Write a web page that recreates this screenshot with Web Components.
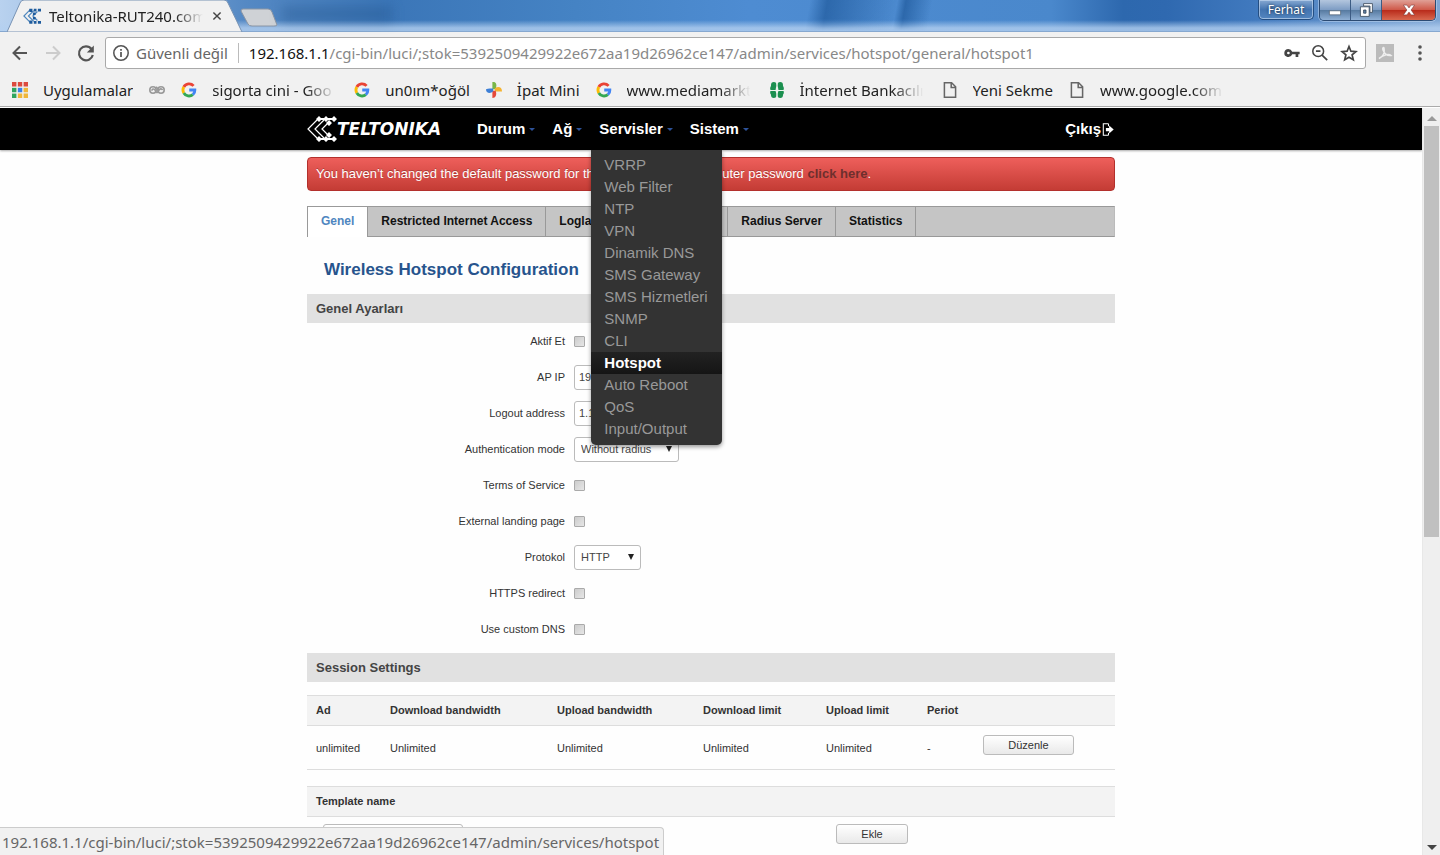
<!DOCTYPE html>
<html lang="tr">
<head>
<meta charset="utf-8">
<title>Teltonika-RUT240.com</title>
<style>
  html, body { margin: 0; height: 100%; overflow: hidden; }
  body { font-family: "Liberation Sans", Arial, sans-serif; color: #333; background: #fefefe; }
</style>
</head>
<body>
<browser-window>
  <tab-strip slot="tabs" label="Teltonika-RUT240.com" user="Ferhat"></tab-strip>
  <address-bar slot="toolbar" host="192.168.1.1" path="/cgi-bin/luci/;stok=5392509429922e672aa19d26962ce147/admin/services/hotspot/general/hotspot1"></address-bar>
  <bookmarks-bar slot="bookmarks">
    <bookmark-link icon="apps">Uygulamalar</bookmark-link>
    <bookmark-link icon="owl" bare></bookmark-link>
    <bookmark-link icon="google" clip>sigorta cini - Goo</bookmark-link>
    <bookmark-link icon="google">un0ım*oğöl</bookmark-link>
    <bookmark-link icon="pinwheel">İpat Mini</bookmark-link>
    <bookmark-link icon="google" clip>www.mediamarkt</bookmark-link>
    <bookmark-link icon="clover" clip>İnternet Bankacılı</bookmark-link>
    <bookmark-link icon="page">Yeni Sekme</bookmark-link>
    <bookmark-link icon="page" clip>www.google.com.</bookmark-link>
  </bookmarks-bar>

  <site-nav>
    <nav-entry>Durum</nav-entry>
    <nav-entry>Ağ</nav-entry>
    <nav-entry items="VRRP|Web Filter|NTP|VPN|Dinamik DNS|SMS Gateway|SMS Hizmetleri|SNMP|CLI|Hotspot|Auto Reboot|QoS|Input/Output" current="Hotspot">Servisler</nav-entry>
    <nav-entry>Sistem</nav-entry>
  </site-nav>
  <page-body>
    <alert-banner link="click here">You haven’t changed the default password for this router. To change router password</alert-banner>
    <page-tabs items="Genel|Restricted Internet Access|Loglama|Landing Page|Radius Server|Statistics" current="Genel"></page-tabs>
    <page-title>Wireless Hotspot Configuration</page-title>
    <form-section heading="Genel Ayarları">
      <form-row label="Aktif Et" type="checkbox"></form-row>
      <form-row label="AP IP" type="text" value="192.168.2.254"></form-row>
      <form-row label="Logout address" type="text" value="1.1.1.1"></form-row>
      <form-row label="Authentication mode" type="select" value="Without radius" size="wide"></form-row>
      <form-row label="Terms of Service" type="checkbox"></form-row>
      <form-row label="External landing page" type="checkbox"></form-row>
      <form-row label="Protokol" type="select" value="HTTP"></form-row>
      <form-row label="HTTPS redirect" type="checkbox"></form-row>
      <form-row label="Use custom DNS" type="checkbox"></form-row>
    </form-section>
    <form-section heading="Session Settings">
      <session-table></session-table>
      <template-table></template-table>
    </form-section>
  </page-body>

  <status-bubble slot="status">192.168.1.1/cgi-bin/luci/;stok=5392509429922e672aa19d26962ce147/admin/services/hotspot</status-bubble>
</browser-window>

<script>
const UI_FONT = '"Noto Sans", "Open Sans", sans-serif';

const define = (name, render) => customElements.define(name, class extends HTMLElement {
  connectedCallback() {
    if (this.shadowRoot) return;
    const t = document.createElement('template');
    t.innerHTML = render(this);
    this.attachShadow({ mode: 'open' }).append(t.content.cloneNode(true));
  }
});
const attr = (el, name) => el.getAttribute(name) || '';

const ICONS = {
  back: '<path d="M17 10H4M10 3.5L3.5 10l6.500 6.500" fill="none" stroke="#555" stroke-width="2"/>',
  forward: '<path d="M3 10h13M10 3.500L16.500 10 10 16.500" fill="none" stroke="#ccc" stroke-width="2"/>',
  reload: '<path d="M15.500 6A7 7 0 1 0 16.800 12" fill="none" stroke="#555" stroke-width="2.200"/><path d="M17.800 2.500v7h-7z" fill="#555"/>',
  info: '<circle cx="10" cy="10" r="8" fill="none" stroke="#555" stroke-width="1.700"/><path d="M10 9v5.500M10 5.500v2" stroke="#555" stroke-width="1.900"/>',
  key: '<path d="M6 5.500a4.500 4.500 0 1 0 4.200 6H14V14.500h3V11.500h1.500V8.500h-8.300A4.500 4.500 0 0 0 6 5.500zm0 3a1.500 1.500 0 1 1 0 3 1.500 1.500 0 0 1 0-3z" fill="#444"/>',
  zoom: '<circle cx="8" cy="8" r="6" fill="none" stroke="#444" stroke-width="1.700"/><path d="M5.500 8h5M12.300 12.300l5.700 5.700" stroke="#444" stroke-width="1.900"/>',
  star: '<path d="M10 3.500l1.900 4.700 5 .4-3.800 3.300 1.200 4.900L10 14.200l-4.300 2.600 1.200-4.900-3.800-3.300 5-.4z" fill="none" stroke="#444" stroke-width="1.700"/>',
  pdf: '<path d="M1 1h18v18H1z" fill="#bbb"/><path d="M4 15.500c4-2 6-6 5-10.500-.7-1-1.700 0-1 2 1.500 4 4 6 8 5.500-2-2-7-1-12 3z" fill="none" stroke="#eee" stroke-width="1.500"/>',
  dots: '<circle cx="10" cy="4" r="1.800" fill="#555"/><circle cx="10" cy="10" r="1.800" fill="#555"/><circle cx="10" cy="16" r="1.800" fill="#555"/>',
  apps: '<path d="M0 0h5.500v5.500H0zM7.300 0h5.500v5.500H7.300zM14.500 0H20v5.500h-5.500z" fill="#dc4b3f"/><path d="M0 7.300h5.500v5.500H0z" fill="#2fa45e"/><path d="M7.300 7.300h5.500v5.500H7.300z" fill="#3b82e6"/><path d="M14.500 7.300H20v5.500h-5.500z" fill="#f0b73a"/><path d="M0 14.500h5.500V20H0z" fill="#2fa45e"/><path d="M7.300 14.500h5.500V20H7.300zM14.500 14.500H20V20h-5.500z" fill="#f0b73a"/>',
  owl: '<g fill="none" stroke="#999" stroke-width="2"><circle cx="5" cy="10" r="4"/><circle cx="15" cy="10" r="4"/><path d="M4 11c-1-3 3-3 4 0s3 3 4 0 4-3 5-1M9 6l3 4"/></g>',
  google: '<g fill="none" stroke-width="3.600"><path d="M15.700 4.800A7.500 7.500 0 0 0 3.500 6.300" stroke="#ea4335"/><path d="M3.500 6.300a7.500 7.500 0 0 0 0 7.400" stroke="#fbbc05"/><path d="M3.500 13.700a7.500 7.500 0 0 0 11.300 2" stroke="#34a853"/><path d="M14.800 15.700A7 7 0 0 0 17.300 10H10.300" stroke="#4285f4"/></g>',
  pinwheel: '<path d="M8 0c5-1 6 4 4 9H8z" fill="#7ab648"/><path d="M11 8c4-3 9-2 9 4h-9z" fill="#f5b32f"/><path d="M8 11h4c2 5 0 9-4 9z" fill="#e5493a"/><path d="M9 8v4c-4 3-9 2-9-3 3-1 6-1 9-1z" fill="#3d7fd6"/>',
  clover: '<g fill="#1c9050"><ellipse cx="6" cy="4" rx="3.500" ry="4"/><ellipse cx="14" cy="4" rx="3.500" ry="4"/><ellipse cx="6" cy="16" rx="3.500" ry="4"/><ellipse cx="14" cy="16" rx="3.500" ry="4"/><circle cx="5" cy="8" r="3.500"/><circle cx="15" cy="8" r="3.500"/><circle cx="5" cy="13" r="3.500"/><circle cx="15" cy="13" r="3.500"/></g><path d="M10 0v20M1 10.500h18" stroke="#eef5ee" stroke-width="1.300"/>',
  page: '<path d="M3 1h9l5 5v13H3zM11.500 1v6H17" fill="none" stroke="#666" stroke-width="1.900"/>',
  favicon: '<g fill="none" stroke="#4d86bd" stroke-width="1.300"><path d="M8 3L1 10l7 7M12 4l-6 6 6 6M16 5l-5 5 5 5"/></g><path d="M7 2h3.500v3.500H7zM12 2h3v3h-3zM16.500 2H20v3h-3.500zM11 6h3v3h-3zM11 11h3v3h-3zM7 15h3.500v3.500H7zM12 15.500h3v3h-3zM16.500 15.500H20v3h-3.500z" fill="#1d5b9d"/>',
  close: '<path d="M4 4l12 12M16 4L4 16" stroke="#444" stroke-width="2.400"/>',
  logout: '<path d="M10 1H2v18h8M10 1v4M10 15v4" fill="none" stroke="#fff" stroke-width="1.600"/><path d="M6 7.500h5V4l7 6-7 6v-3.500H6z" fill="#fff"/>',
  minimize: '<path d="M3 11h14v5H3z" fill="#fff" stroke="#456" stroke-width=".8"/>',
  restore: '<path d="M7 2h11v11h-3V5H7z" fill="#fff" stroke="#345"/><path d="M3 6h11v12H3zm4 4v4h3v-4z" fill="#fff" fill-rule="evenodd" stroke="#345"/>',
  cross: '<path d="M2 3h5l3 4 3-4h5l-5 7 5 7h-5l-3-4-3 4H2l5-7z" fill="#fff" stroke="#733" stroke-width=".8"/>'
};

define('ui-icon', el => `
  <style>:host{display:block;flex:none;width:${attr(el, 'size') || 16}px;height:${attr(el, 'size') || 16}px}svg{display:block;width:100%;height:100%}</style>
  <svg viewBox="0 0 20 20" aria-hidden="true">${ICONS[attr(el, 'name')]}</svg>`);

define('browser-window', () => `
  <style>
    :host{display:flex;flex-direction:column;height:100vh;position:relative;background:#fefefe}
    .view{flex:1;min-height:0;display:flex}
    main{flex:1;min-width:0;overflow:hidden}
  </style>
  <slot name="tabs"></slot><slot name="toolbar"></slot><slot name="bookmarks"></slot>
  <div class="view"><main><slot></slot></main><scroll-track></scroll-track></div>
  <slot name="status"></slot>`);

define('tab-strip', el => `
  <style>
    :host{display:flex;align-items:flex-start;height:31px;box-sizing:content-box;border-bottom:1px solid #86a8d0;position:relative;font-family:${UI_FONT};
      background:linear-gradient(180deg,transparent 65%,#b4d0f0cc 90%),linear-gradient(90deg,#b9d2ef 0,#5589c4 17%,#3b76b8 27%,#4583c4 40%,#4e8cd2 52%,#4a88cc 73%,#2d68ae 78%,#2f69b0 81%,#4079be 87%,#7fa6d4 100%)}
    .tab{width:236px;height:32px;margin-left:7px;position:relative;display:flex;align-items:center;box-sizing:border-box;padding:0 20px 0 16px;gap:8px;z-index:1}
    .shape{position:absolute;inset:0;width:100%;height:100%;z-index:-1}
    .tab span{flex:1;font-size:15px;line-height:20px;color:#222;white-space:nowrap;overflow:hidden;-webkit-mask-image:linear-gradient(90deg,#000 82%,transparent);mask-image:linear-gradient(90deg,#000 82%,transparent)}
    button{border:0;background:none;padding:0;display:flex;align-items:center;justify-content:center}
    .new{width:38px;height:19px;margin:8px 0 0 -3px}
    .new svg{width:38px;height:19px}
    .ghost{margin:6px 0 0 4px;width:110px;height:16px;background:#1d4d8555;filter:blur(6px)}
    .shade{align-self:stretch;flex:1;background:linear-gradient(100deg,transparent 48%,#1d5799aa 50%,transparent 58%,#1d5799aa 59%,transparent 62%);-webkit-mask-image:linear-gradient(#000 60%,transparent);mask-image:linear-gradient(#000 60%,transparent)}
    .win{display:flex;margin-right:4px}
    .user{width:56px;height:20px;margin-right:5px;border:1px solid #244e82;border-top:0;border-radius:0 0 5px 5px;background:linear-gradient(#87a9d2,#4374b0 50%,#5385bf);box-shadow:inset 0 0 0 1px #c3d8f0aa;color:#fff;font:12px/18px ${UI_FONT};text-shadow:0 0 3px #123}
    .group{display:flex;height:20px;border:1px solid #2c4b73;border-top:0;border-radius:0 0 5px 5px;overflow:hidden;box-shadow:0 0 0 1px #c3d8f088}
    .group button{width:31px;background:linear-gradient(#b3c6de,#7e9dc4 48%,#55799f 50%,#8fb0d5);border-right:1px solid #3c5b83}
    .group .x{width:53px;border:0;background:linear-gradient(#e0a096,#cf5a4a 48%,#b82a1a 50%,#d8684f)}
  </style>
  <div class="tab">
    <svg class="shape" viewBox="0 0 236 32" preserveAspectRatio="none"><path d="M0 32L13 3Q14 0 17 0H217Q220 0 221 3L235 32z" fill="#f1f1f1" stroke="#7893b4"/></svg>
    <ui-icon name="favicon" size="18"></ui-icon><span>${attr(el, 'label')}</span>
    <button aria-label="Sekmeyi kapat"><ui-icon name="close" size="12"></ui-icon></button>
  </div>
  <button class="new" aria-label="Yeni sekme"><svg viewBox="0 0 38 19"><path d="M3 1h25q3 0 4 3l5 13q0 1-3 1H12q-3 0-4-2L1 3q0-2 2-2z" fill="#cfd2d6" stroke="#8b96a5"/></svg></button>
  <div class="ghost"></div>
  <div class="shade"></div>
  <div class="win">
    <button class="user">${attr(el, 'user')}</button>
    <div class="group"><button aria-label="Simge durumuna küçült"><ui-icon name="minimize"></ui-icon></button><button aria-label="Önceki boyut"><ui-icon name="restore"></ui-icon></button><button class="x" aria-label="Kapat"><ui-icon name="cross" size="14"></ui-icon></button></div>
  </div>`);

define('address-bar', el => `
  <style>
    :host{display:flex;align-items:center;height:42px;background:#f1f1f1;padding:0 10px;font-family:${UI_FONT}}
    button{border:0;background:none;padding:0;display:block}
    .nav{display:flex;gap:13px;width:95px}
    .box{flex:1;min-width:0;height:30px;border:1px solid #a9a9a9;border-radius:3px;background:#fff;display:flex;align-items:center;padding:0 6px;font-size:15px;line-height:20px;white-space:nowrap}
    .chip{display:flex;align-items:center;gap:6px;color:#666;padding-right:10px;border-right:1px solid #bbb;margin-right:10px}
    .url{flex:1;min-width:0;overflow:hidden;color:#888}
    .url b{font-weight:400;color:#111}
    .tools{display:flex;align-items:center;gap:10px}
    .ext{margin:0 15px 0 9px}
  </style>
  <div class="nav"><button aria-label="Geri"><ui-icon name="back" size="20"></ui-icon></button><button aria-label="İleri"><ui-icon name="forward" size="20"></ui-icon></button><button aria-label="Yenile"><ui-icon name="reload" size="20"></ui-icon></button></div>
  <div class="box"><div class="chip"><ui-icon name="info" size="18"></ui-icon><span>Güvenli değil</span></div>
    <div class="url"><b>${attr(el, 'host')}</b>${attr(el, 'path')}</div>
    <div class="tools"><button aria-label="Şifreler"><ui-icon name="key" size="18"></ui-icon></button><button aria-label="Yakınlaştırma"><ui-icon name="zoom" size="18"></ui-icon></button><button aria-label="Yer işareti"><ui-icon name="star" size="20"></ui-icon></button></div>
  </div>
  <button class="ext" aria-label="PDF"><ui-icon name="pdf" size="20"></ui-icon></button>
  <button aria-label="Menü"><ui-icon name="dots" size="20"></ui-icon></button>`);

define('bookmarks-bar', () => `
  <style>:host{display:flex;align-items:center;gap:16px;height:31px;padding:0 12px 1px;background:#f1f1f1;border-bottom:1px solid #aaa;margin-bottom:1px}</style><slot></slot>`);

define('bookmark-link', el => `
  <style>
    :host{display:block;flex:none;font-family:${UI_FONT}}
    a{display:flex;align-items:center;gap:15px;color:#222;text-decoration:none;font-size:15px;line-height:20px;white-space:nowrap}
    span{display:block;overflow:hidden}
    :host([clip]) span{width:126px;-webkit-mask-image:linear-gradient(90deg,#000 74%,transparent 98%);mask-image:linear-gradient(90deg,#000 74%,transparent 98%)}
    :host([bare]) span{display:none}
  </style>
  <a href="#"><ui-icon name="${attr(el, 'icon')}"></ui-icon><span><slot></slot></span></a>`);

define('scroll-track', () => `
  <style>
    :host{display:flex;flex-direction:column;align-items:center;width:17px;background:#efefef;border-left:1px solid #e8e8e8}
    i{width:0;height:0;border:5px solid transparent;margin:0 0 5px}
    .up{border-bottom-color:#999;margin-top:3px}
    .down{border-top-color:#444;margin:auto 0 0}
    .thumb{width:15px;height:55%;background:#c0c0c0}
  </style><i class="up"></i><div class="thumb"></div><i class="down"></i>`);

define('site-nav', () => `
  <style>
    :host{display:block;background:#000;box-shadow:0 1px 2px #0005}
    nav{max-width:808px;height:42px;margin:auto;display:flex;align-items:center;gap:17px}
    .logo{display:flex;align-items:center;width:153px;color:#fff;text-decoration:none}
    .logo svg{flex:none;width:30px;height:26px}
    .logo span{font:italic bold 17px/20px "DejaVu Sans",sans-serif}
    .exit{margin-left:auto;display:flex;align-items:center;gap:1px;color:#fff;text-decoration:none;font-weight:bold;font-size:15px;line-height:20px}
  </style>
  <nav>
    <a class="logo" href="#"><svg viewBox="0 0 30 26" aria-hidden="true"><g fill="none" stroke="#fff" stroke-width="1.200"><path d="M12 2L1 13l11 11M17 4l-9 9 9 9M23 5l-8 8 8 8"/></g><g fill="#fff"><path d="M12 0l3 3-3 3-3-3zM19 0l3 3-3 3-3-3zM27 0l3 3-3 3-3-3zM12 20l3 3-3 3-3-3zM19 20l3 3-3 3-3-3zM27 20l3 3-3 3-3-3zM22 4l3 3-3 3-3-3zM22 16l3 3-3 3-3-3z"/><path d="M12 2h14v2H12zM12 22h14v2H12z"/></g></svg><span>TELTONIKA</span></a>
    <slot></slot>
    <a class="exit" href="#">Çıkış<ui-icon name="logout" size="13"></ui-icon></a>
  </nav>`);

define('nav-entry', el => {
  const items = attr(el, 'items').split('|').filter(Boolean);
  return `
  <style>
    :host{display:block;position:relative;font-size:15px;line-height:22px}
    a{text-decoration:none}
    .top{display:flex;align-items:center;gap:4px;color:#fff;font-weight:bold}
    .top::after{content:"";border:3px solid transparent;border-top-color:#2d5299;border-bottom:0}
    ul{position:absolute;z-index:5;top:32px;left:-8px;width:131px;margin:0;padding:4px 0 5px;list-style:none;background:#333;border-radius:0 0 5px 5px;box-shadow:0 2px 4px #0006}
    li a{display:block;padding:0 13px;color:#999;white-space:nowrap}
    .on{background:linear-gradient(#222,#151515);color:#fff;font-weight:bold}
  </style>
  <a class="top" href="#"><slot></slot></a>
  ${items.length ? `<ul>${items.map(i => `<li><a href="#"${i === attr(el, 'current') ? ' class="on"' : ''}>${i}</a></li>`).join('')}</ul>` : ''}`;
});

define('page-body', () => `
  <style>:host{display:block;max-width:808px;margin:7px auto 0}</style><slot></slot>`);

define('alert-banner', el => `
  <style>
    :host{display:block;border:1px solid #b3302c;border-radius:4px;background:linear-gradient(#ee5f5b,#c43c35);color:#fff;font-size:13px;line-height:18px;padding:7px 8px;text-shadow:0 -1px #0004;white-space:nowrap;overflow:hidden}
    a{color:#6e2f2d;font-weight:bold;text-decoration:none;text-shadow:none}
  </style><slot></slot> <a href="#">${attr(el, 'link')}</a>.`);

define('page-tabs', el => `
  <style>
    :host{display:flex;margin-top:15px;height:29px;background:#c5c5c5;border:1px solid #999;border-right-color:#bbb}
    a{padding:0 13px;border-right:1px solid #999;color:#111;font-weight:bold;font-size:12px;line-height:28px;text-decoration:none;white-space:nowrap}
    .on{background:#fff;color:#4f86c0;height:30px}
  </style>${attr(el, 'items').split('|').map(i => `<a href="#"${i === attr(el, 'current') ? ' class="on"' : ''}>${i}</a>`).join('')}`);

define('page-title', () => `
  <style>:host{display:block}h1{margin:0;padding:23px 17px 14px;font-size:17px;line-height:20px;color:#27548d}</style><h1><slot></slot></h1>`);

define('form-section', el => `
  <style>:host{display:block;margin-bottom:6px}h2{margin:0;background:#e1e1e1;color:#444;font-size:13px;line-height:29px;padding:0 9px}</style>
  <h2>${attr(el, 'heading')}</h2><slot></slot>`);

define('form-row', el => {
  const type = attr(el, 'type'), value = attr(el, 'value');
  const control = type === 'select'
    ? `<span class="pick"><select id="f"><option>${value}</option></select></span>`
    : `<input id="f" type="${type}"${type === 'text' ? ` value="${value}"` : ''}>`;
  return `
  <style>
    :host{display:grid;grid-template-columns:258px 1fr;column-gap:9px;align-items:center;height:36px;font-size:11px;line-height:16px}
    label{text-align:right}
    input,select{box-sizing:border-box;font:11px/16px "Liberation Sans",Arial,sans-serif;color:#444;margin:0;border:1px solid #bbb;border-radius:3px;background:#fff;display:block;appearance:none}
    input[type=text]{width:140px;height:25px;padding:0 4px}
    input[type=checkbox]{width:11px;height:11px;border-color:#aaa;border-radius:1px;background:linear-gradient(135deg,#ccc,#e6e6e6)}
    select{width:67px;height:25px;padding:0 6px}
    :host([size=wide]) select{width:105px}
    .pick{position:relative;justify-self:start}
    .pick::after{content:"";position:absolute;right:7px;top:9px;border:3px solid transparent;border-top:6px solid #222;border-bottom:0}
  </style>
  <label for="f">${attr(el, 'label')}</label>${control}`;
});

const TABLE_CSS = `
  :host{display:block;font-size:11px}
  table{width:100%;table-layout:fixed;border-collapse:collapse;line-height:16px}
  th{height:28px;padding:0 9px 1px;text-align:left;background:#f3f3f3;border:1px solid #ddd;border-width:1px 0;white-space:nowrap}
  button{box-sizing:border-box;height:20px;padding:0;border:1px solid #bbb;border-radius:3px;background:linear-gradient(#fff,#e9e9e9);color:#333;font:11px/16px "Liberation Sans",Arial,sans-serif;display:block}`;

define('session-table', () => `
  <style>${TABLE_CSS}
    :host{margin-top:13px}
    td{height:43px;padding:0 9px;border-bottom:1px solid #ddd}
    button{width:91px;margin-bottom:6px}
    .a{width:74px}.b{width:167px}.c{width:146px}.d{width:123px}.e{width:101px}.f{width:56px}
  </style>
  <table>
    <colgroup><col class="a"><col class="b"><col class="c"><col class="d"><col class="e"><col class="f"><col></colgroup>
    <thead><tr><th>Ad</th><th>Download bandwidth</th><th>Upload bandwidth</th><th>Download limit</th><th>Upload limit</th><th>Periot</th><th></th></tr></thead>
    <tbody><tr><td>unlimited</td><td>Unlimited</td><td>Unlimited</td><td>Unlimited</td><td>Unlimited</td><td>-</td><td><button>Düzenle</button></td></tr></tbody>
  </table>`);

define('template-table', () => `
  <style>${TABLE_CSS}
    :host{margin-top:16px}
    td{padding:7px 9px;vertical-align:top}
    .name{width:520px}
    button{width:72px}
    input{box-sizing:border-box;display:block;width:140px;height:25px;margin:0 0 0 7px;border:1px solid #bbb;border-radius:3px}
  </style>
  <table>
    <colgroup><col class="name"><col></colgroup>
    <thead><tr><th>Template name</th><th></th></tr></thead>
    <tbody><tr><td><input type="text" aria-label="Template name"></td><td><button>Ekle</button></td></tr></tbody>
  </table>`);

define('status-bubble', () => `
  <style>:host{display:block;position:absolute;z-index:9;left:0;bottom:0;box-sizing:border-box;height:28px;padding:0 4px 0 2px;background:#f1f1f1;border:1px solid #ccc;border-width:1px 1px 0 0;border-radius:0 4px 0 0;color:#666;font:15px/28px ${UI_FONT};white-space:nowrap}</style><slot></slot>`);
</script>
</body>
</html>
